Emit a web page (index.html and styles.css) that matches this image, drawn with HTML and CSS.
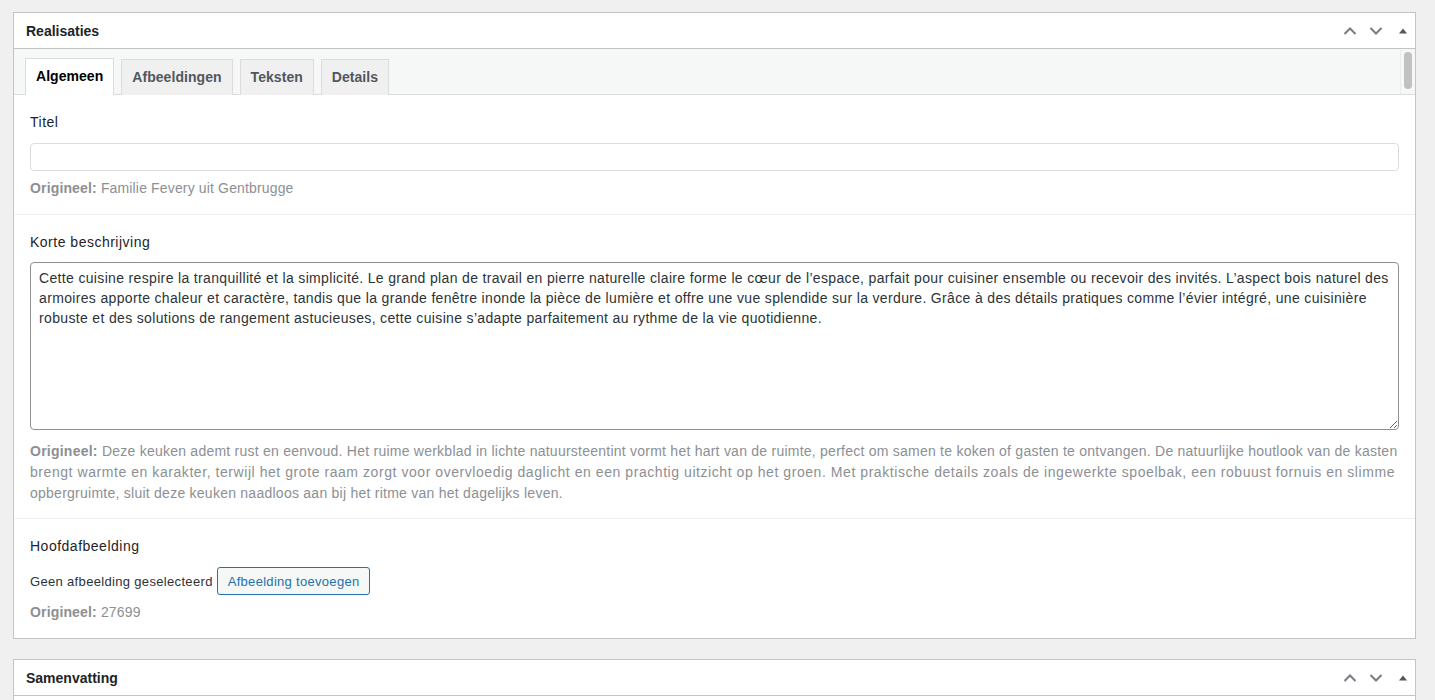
FILE: index.html
```html
<!DOCTYPE html>
<html lang="nl">
	<head>
		<meta charset="utf-8">
		<title>Realisaties</title>
		<link rel="stylesheet" href="styles.css">
	</head>
	<body>
		<div class="postbox">
			<div class="postbox-header">
				<h2>Realisaties</h2>
				<div class="handle-actions">
					<svg class="chevron" width="14" height="10" viewBox="0 0 14 10"><path d="M1.5 8 L7 2.5 L12.5 8" fill="none" stroke="#787c82" stroke-width="2"/></svg>
					<svg class="chevron" width="14" height="10" viewBox="0 0 14 10"><path d="M1.5 2 L7 7.5 L12.5 2" fill="none" stroke="#787c82" stroke-width="2"/></svg>
					<svg class="toggle" width="10" height="10" viewBox="0 0 10 10"><path d="M1 7.5 L5 2.5 L9 7.5 Z" fill="#50575e"/></svg>
				</div>
			</div>
			<div class="tab-nav">
				<div class="tabs">
					<a class="tab active">Algemeen</a>
					<a class="tab">Afbeeldingen</a>
					<a class="tab">Teksten</a>
					<a class="tab">Details</a>
				</div>
				<div class="scrollbar"><div class="thumb"></div></div>
			</div>

			<div class="field">
				<label>Titel</label>
				<input type="text" class="text-input">
				<p class="original"><b>Origineel:</b> Familie Fevery uit Gentbrugge</p>
			</div>

			<div class="field field-long">
				<label>Korte beschrijving</label>
				<textarea class="text-area">Cette cuisine respire la tranquillité et la simplicité. Le grand plan de travail en pierre naturelle claire forme le cœur de l’espace, parfait pour cuisiner ensemble ou recevoir des invités. L’aspect bois naturel des
armoires apporte chaleur et caractère, tandis que la grande fenêtre inonde la pièce de lumière et offre une vue splendide sur la verdure. Grâce à des détails pratiques comme l’évier intégré, une cuisinière
robuste et des solutions de rangement astucieuses, cette cuisine s’adapte parfaitement au rythme de la vie quotidienne.</textarea>
				<p class="original long">
					<span class="line l1"><b>Origineel:</b> Deze keuken ademt rust en eenvoud. Het ruime werkblad in lichte natuursteentint vormt het hart van de ruimte, perfect om samen te koken of gasten te ontvangen. De natuurlijke houtlook van de kasten</span>
					<span class="line l2">brengt warmte en karakter, terwijl het grote raam zorgt voor overvloedig daglicht en een prachtig uitzicht op het groen. Met praktische details zoals de ingewerkte spoelbak, een robuust fornuis en slimme</span>
					<span class="line l3">opbergruimte, sluit deze keuken naadloos aan bij het ritme van het dagelijks leven.</span>
				</p>
			</div>

			<div class="field">
				<label>Hoofdafbeelding</label>
				<div class="image-row">
					<span>Geen afbeelding geselecteerd</span>
					<button class="button">Afbeelding toevoegen</button>
				</div>
				<p class="original"><b>Origineel:</b> 27699</p>
			</div>
		</div>

		<div class="postbox">
			<div class="postbox-header">
				<h2>Samenvatting</h2>
				<div class="handle-actions">
					<svg class="chevron" width="14" height="10" viewBox="0 0 14 10"><path d="M1.5 8 L7 2.5 L12.5 8" fill="none" stroke="#787c82" stroke-width="2"/></svg>
					<svg class="chevron" width="14" height="10" viewBox="0 0 14 10"><path d="M1.5 2 L7 7.5 L12.5 2" fill="none" stroke="#787c82" stroke-width="2"/></svg>
					<svg class="toggle" width="10" height="10" viewBox="0 0 10 10"><path d="M1 7.5 L5 2.5 L9 7.5 Z" fill="#50575e"/></svg>
				</div>
			</div>
			<div class="postbox-body"></div>
		</div>
	</body>
</html>
```

FILE: styles.css
```css
body {
	font-family: "Liberation Sans", Arial, sans-serif;
	font-size: 14px;
	color: #1d2327;
	margin: 0;
	padding: 12px 19px 0 13px;
	background-color: #f0f0f1;
	overflow: hidden;
}
.postbox {
	background-color: #fff;
	border: 1px solid #c3c4c7;
	margin-bottom: 20px;
}
.postbox-header {
	display: flex;
	align-items: center;
	justify-content: space-between;
	height: 35px;
	border-bottom: 1px solid #c3c4c7;
	padding: 0 7px 0 12px;
}
.postbox-header h2 {
	font-size: 14px;
	font-weight: bold;
	margin: 0;
	color: #1d2327;
}
.handle-actions {
	display: flex;
	align-items: center;
}
.handle-actions svg {
	display: block;
}
.handle-actions .chevron + .chevron {
	margin-left: 12px;
}
.handle-actions .toggle {
	margin-left: 15px;
}
.tab-nav {
	display: flex;
	justify-content: space-between;
	background-color: #f6f7f7;
	border-bottom: 1px solid #dcdcde;
	height: 45px;
}
.tabs {
	display: flex;
	align-items: flex-end;
	gap: 7px;
	padding-left: 11px;
}
.tab {
	display: block;
	height: 35px;
	line-height: 35px;
	padding: 0 10px;
	margin-bottom: -1px;
	border: 1px solid #dcdcde;
	border-bottom: none;
	background-color: #f0f0f1;
	color: #50575e;
	font-weight: bold;
	font-size: 14px;
	letter-spacing: 0.05px;
}
.tab.active {
	background-color: #fff;
	color: #000;
	height: 36px;
}
.scrollbar {
	width: 15px;
	border-left: 1px solid #ececec;
	padding: 3px 0;
	box-sizing: border-box;
	display: flex;
	justify-content: center;
}
.scrollbar .thumb {
	width: 8px;
	height: 37px;
	border-radius: 4px;
	background-color: #c1c1c1;
}
.field {
	padding: 17px 16px 16px;
	border-bottom: 1px solid #f0f0f1;
}
.field-long {
	padding-bottom: 14px;
}
.field:last-child {
	border-bottom: none;
}
.field label {
	display: block;
	line-height: 20px;
	color: #1d2327;
	margin-bottom: 11px;
	letter-spacing: 0.5px;
}
.text-input {
	display: block;
	width: 100%;
	height: 28px;
	box-sizing: border-box;
	border: 1px solid #dcdcde;
	border-radius: 4px;
	margin: 0;
}
.text-area {
	display: block;
	width: 100%;
	height: 168px;
	box-sizing: border-box;
	border: 1px solid #8c8f94;
	border-radius: 4px;
	padding: 5px 2px 4px 8px;
	margin: -1px 0 0;
	font-family: "Liberation Sans", Arial, sans-serif;
	font-size: 14px;
	line-height: 20px;
	letter-spacing: 0.34px;
	color: #2c3338;
	white-space: pre;
	overflow: hidden;
	resize: vertical;
}
.original {
	margin: 7px 0 0;
	line-height: 20px;
	color: #8c8f94;
	letter-spacing: 0.15px;
}
.original.long {
	margin-top: 11px;
	line-height: 21px;
	white-space: nowrap;
}
.original .line {
	display: block;
}
.original .l1 {
	letter-spacing: 0.24px;
}
.original .l2 {
	letter-spacing: 0.56px;
}
.original .l3 {
	letter-spacing: 0.25px;
}
.image-row {
	display: flex;
	align-items: center;
	gap: 4px;
	font-size: 13px;
	color: #2c3338;
	letter-spacing: 0.33px;
}
.button {
	height: 28px;
	padding: 0 10px;
	font-family: "Liberation Sans", Arial, sans-serif;
	font-size: 13px;
	letter-spacing: 0.3px;
	color: #2271b1;
	background-color: #f6f7f7;
	border: 1px solid #2271b1;
	border-radius: 3px;
}
.postbox-body {
	height: 20px;
}
```
